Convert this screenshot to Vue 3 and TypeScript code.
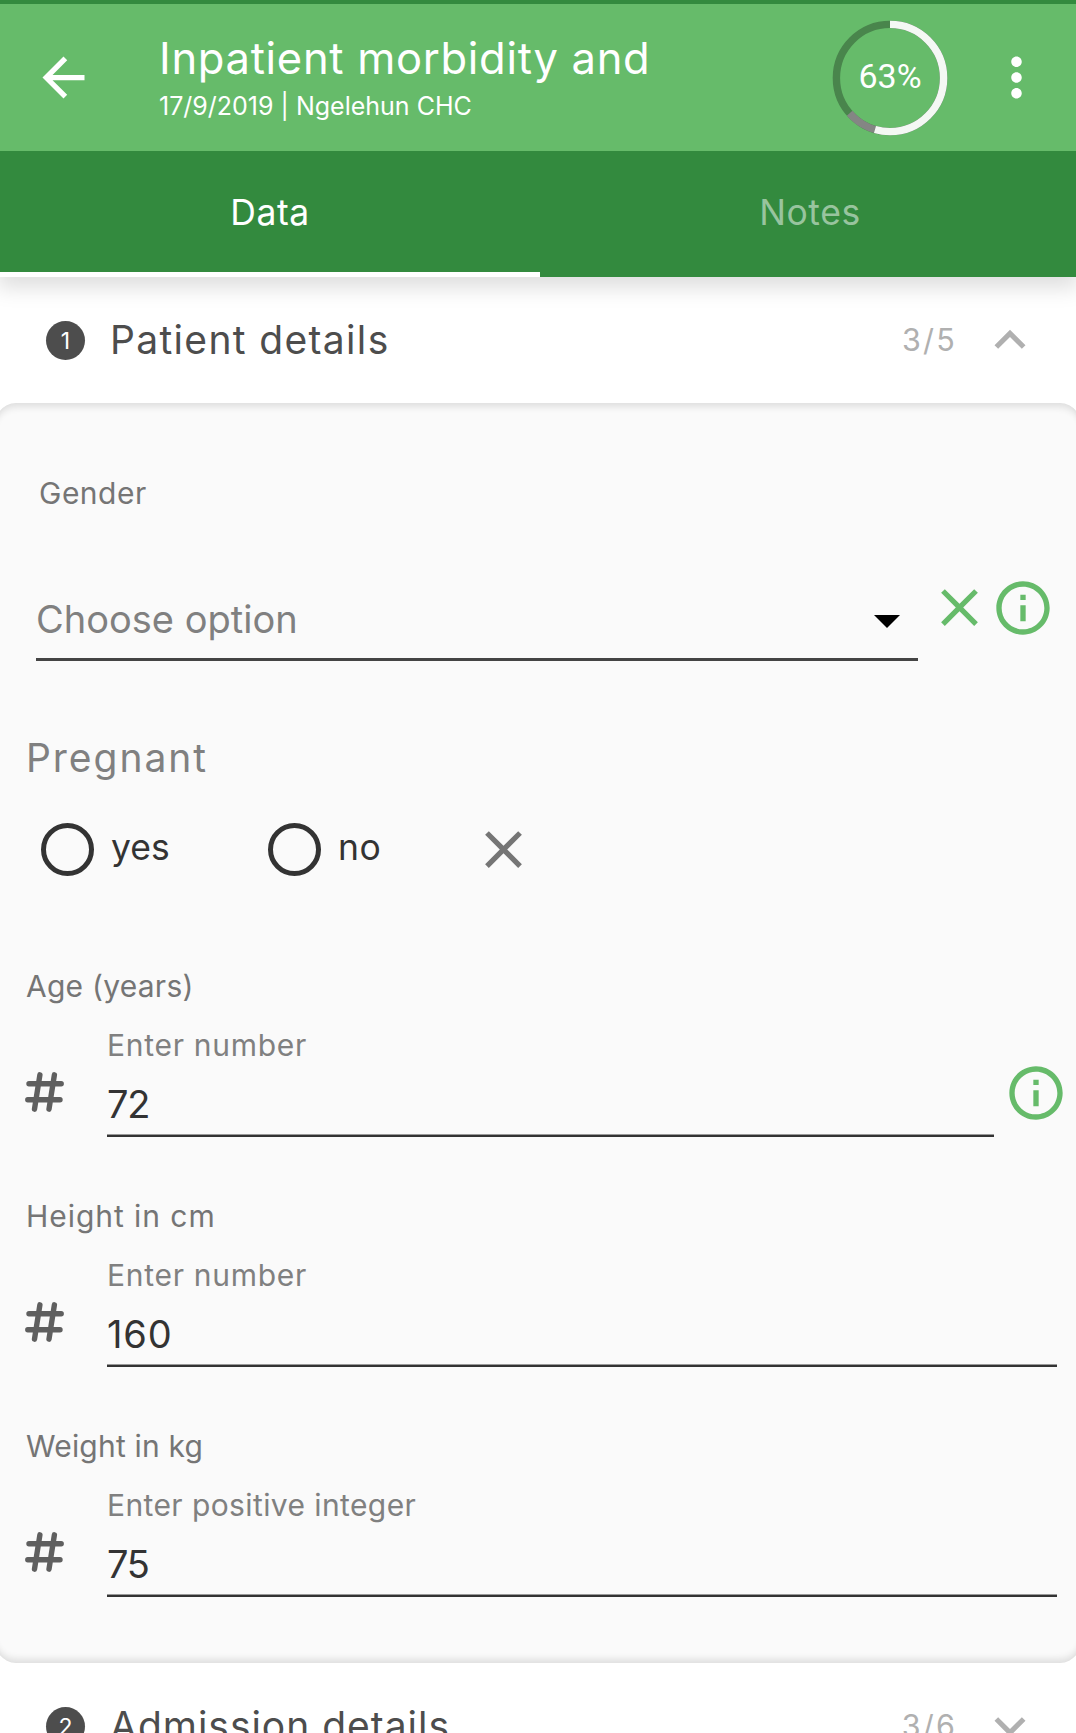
<script setup lang="ts">
interface NumberField {
  label: string
  hint: string
  value: string
  info: boolean
  spacing: string
  hintSpacing: string
  valueSpacing: string
}

const fields: NumberField[] = [
  { label: 'Age (years)', hint: 'Enter number', value: '72', info: true, spacing: '0.25px', hintSpacing: '0.72px', valueSpacing: '-1.3px' },
  { label: 'Height in cm', hint: 'Enter number', value: '160', info: false, spacing: '0.95px', hintSpacing: '0.72px', valueSpacing: '0.9px' },
  { label: 'Weight in kg', hint: 'Enter positive integer', value: '75', info: false, spacing: '0.19px', hintSpacing: '0.4px', valueSpacing: '-1.3px' },
]

const icons = {
  back: 'M20 11H7.83l5.59-5.59L12 4l-8 8 8 8 1.41-1.41L7.83 13H20v-2z',
  more: 'M12 8c1.1 0 2-.9 2-2s-.9-2-2-2-2 .9-2 2 .9 2 2 2zm0 2c-1.1 0-2 .9-2 2s.9 2 2 2 2-.9 2-2-.9-2-2-2zm0 6c-1.1 0-2 .9-2 2s.9 2 2 2 2-.9 2-2-.9-2-2-2z',
  close: 'M19 6.41L17.59 5 12 10.59 6.41 5 5 6.41 10.59 12 5 17.59 6.41 19 12 13.41 17.59 19 19 17.59 13.41 12z',
  info: 'M11 7h2v2h-2zm0 4h2v6h-2zm1-9C6.48 2 2 6.48 2 12s4.48 10 10 10 10-4.48 10-10S17.52 2 12 2zm0 18c-4.41 0-8-3.59-8-8s3.59-8 8-8 8 3.59 8 8-3.59 8-8 8z',
  less: 'M12 8l-6 6 1.41 1.41L12 10.83l4.59 4.58L18 14z',
  expand: 'M16.59 8.59L12 13.17 7.41 8.59 6 10l6 6 6-6z',
}

const radius = 53.6
const circumference = 2 * Math.PI * radius
const arc = (degrees: number) => `${(circumference * degrees) / 360} ${circumference}`
</script>

<template>
  <div class="screen">
    <header class="top">
      <div class="bar">
        <svg class="i63" viewBox="0 0 24 24"><path :d="icons.back" /></svg>
        <div class="heading">
          <h1>Inpatient morbidity and</h1>
          <p>17/9/2019 | Ngelehun CHC</p>
        </div>
        <svg class="ring" viewBox="0 0 116 116">
          <g fill="none" stroke-width="7.4" transform="rotate(-90 58 58)">
            <circle cx="58" cy="58" :r="radius" stroke="#49854c" />
            <circle cx="58" cy="58" :r="radius" stroke="#848684" :stroke-dasharray="arc(228.5)" />
            <circle cx="58" cy="58" :r="radius" stroke="#f4f8f4" :stroke-dasharray="arc(196)" />
          </g>
          <text x="58" y="68" text-anchor="middle">63%</text>
        </svg>
        <svg class="i63" viewBox="0 0 24 24"><path :d="icons.more" /></svg>
      </div>
      <nav class="tabs">
        <div class="tab active">Data</div>
        <div class="tab notes">Notes</div>
      </nav>
    </header>

    <section class="section">
      <span class="num">1</span>
      <h2 class="patient">Patient details</h2>
      <span class="count">3/5</span>
      <svg class="chev" viewBox="0 0 24 24"><path :d="icons.less" /></svg>
    </section>

    <div class="card">
      <div class="gender">Gender</div>
      <div class="choose-row">
        <div class="choose">
          <span>Choose option</span>
          <svg class="caret" viewBox="0 0 26 13"><path d="M0 0h26L13 13z" /></svg>
        </div>
        <svg class="i63 green" viewBox="0 0 24 24"><path :d="icons.close" /></svg>
        <svg class="i64 green" viewBox="0 0 24 24"><path :d="icons.info" /></svg>
      </div>

      <div class="pregnant">Pregnant</div>
      <div class="radios">
        <label class="yes"><i class="radio"></i><span>yes</span></label>
        <label class="no"><i class="radio"></i><span>no</span></label>
        <svg class="i63 gray" viewBox="0 0 24 24"><path :d="icons.close" /></svg>
      </div>

      <div v-for="f in fields" :key="f.label" class="block">
        <div class="label" :style="{ letterSpacing: f.spacing }">{{ f.label }}</div>
        <div class="entry">
          <svg class="hash" viewBox="0 0 39 40">
            <path d="M14.9 2.8 9.5 37.2M29.4 2.8 24 37.2M4 11.7h32.2M2.8 27.7H35" />
          </svg>
          <div class="field">
            <div class="hint" :style="{ letterSpacing: f.hintSpacing }">{{ f.hint }}</div>
            <div class="value" :style="{ letterSpacing: f.valueSpacing }">{{ f.value }}</div>
          </div>
          <svg v-if="f.info" class="i64 green info" viewBox="0 0 24 24"><path :d="icons.info" /></svg>
        </div>
      </div>
    </div>

    <section class="section">
      <span class="num">2</span>
      <h2 class="admission">Admission details</h2>
      <span class="count">3/6</span>
      <svg class="chev" viewBox="0 0 24 24"><path :d="icons.expand" /></svg>
    </section>
  </div>
</template>

<style>
html,
body {
  margin: 0;
  overflow: hidden;
  background: #fff;
}
</style>

<style scoped>
.screen {
  width: 1076px;
  height: 1733px;
  overflow: hidden;
  background: #fff;
  font-family: Inter, Roboto, sans-serif;
}
h1,
h2,
p {
  margin: 0;
  font-weight: 400;
}
svg {
  display: block;
  flex: none;
}
.top {
  position: relative;
  z-index: 1;
  border-top: 4px solid #338a3e;
  box-shadow: 0 8px 20px 3px rgba(0, 0, 0, 0.13);
}
.bar {
  display: flex;
  align-items: center;
  box-sizing: border-box;
  height: 147px;
  padding: 0 28px 0 32px;
  background: #66bb6a;
  color: #fff;
  fill: #fff;
}
.i63 {
  width: 63px;
  height: 63px;
}
.i64 {
  width: 64px;
  height: 64px;
}
.heading {
  align-self: flex-start;
  margin: 28px auto 0 64px;
  white-space: nowrap;
}
h1 {
  font-size: 43.5px;
  line-height: 52px;
  letter-spacing: 0.7px;
}
.heading p {
  margin-top: 7px;
  font-size: 25px;
  line-height: 30px;
}
.ring {
  width: 116px;
  height: 116px;
  margin-right: 37px;
}
.ring text {
  font: 34px Roboto, sans-serif;
}
.tabs {
  display: flex;
  height: 126px;
  background: #338a3e;
}
.tab {
  flex: none;
  box-sizing: border-box;
  width: 540px;
  height: 126px;
  text-align: center;
  font-size: 35.5px;
  line-height: 124px;
  letter-spacing: 0.6px;
  color: #fff;
}
.active {
  border-bottom: 5px solid #fff;
}
.notes {
  color: #98c49e;
}
.section {
  display: flex;
  align-items: center;
  box-sizing: border-box;
  height: 126px;
  padding: 0 35px 0 46px;
  background: #fff;
}
.num {
  width: 39px;
  height: 39px;
  margin-top: 1px;
  border-radius: 50%;
  background: #4d4d4d;
  color: #fff;
  font-size: 23px;
  line-height: 41px;
  text-align: center;
}
h2 {
  margin-left: 25px;
  margin-right: auto;
  color: #4d4d4d;
  font-size: 39px;
  line-height: 126px;
}
.patient {
  letter-spacing: 1.34px;
}
.admission {
  letter-spacing: 0.98px;
}
.count {
  color: #b0b0b0;
  font-size: 30.5px;
  line-height: 126px;
  letter-spacing: 2.2px;
}
.chev {
  width: 62px;
  height: 62px;
  margin-left: 22px;
  fill: #b0b0b0;
}
.card {
  box-sizing: border-box;
  height: 1260px;
  margin: 0 -8px;
  padding: 72px 8px 0;
  border-radius: 24px / 30px;
  background: #fafafa;
  box-shadow:
    inset 0 5px 7px -1px rgba(0, 0, 0, 0.11),
    inset 0 -5px 7px -1px rgba(0, 0, 0, 0.11);
}
.gender {
  margin-left: 39px;
  color: #757575;
  font-size: 30px;
  line-height: 36px;
  letter-spacing: 0.5px;
}
.choose-row {
  display: flex;
  align-items: flex-start;
  height: 86px;
  margin-top: 64px;
  padding-left: 36px;
}
.choose-row .green {
  margin-top: 1px;
}
.choose {
  display: flex;
  justify-content: space-between;
  box-sizing: border-box;
  width: 882px;
  height: 65px;
  margin: 21px 10px 0 0;
  padding-right: 18px;
  border-bottom: 3px solid #444;
  color: #808080;
  font-size: 38px;
  line-height: 46px;
}
.choose .caret {
  width: 26px;
  height: 13px;
  margin-top: 19px;
}
.green {
  fill: #66bb6a;
}
.gray {
  fill: #757575;
}
.pregnant {
  margin: 73px 0 0 26px;
  color: #808080;
  font-size: 39px;
  line-height: 48px;
  letter-spacing: 1.95px;
}
.radios {
  display: flex;
  align-items: center;
  height: 64px;
  margin-top: 35px;
  padding-left: 41px;
  color: #333;
  font-size: 35.5px;
  line-height: 44px;
}
.radios label {
  display: flex;
  align-items: center;
}
.radios span {
  padding-bottom: 2px;
}
.radio {
  box-sizing: border-box;
  width: 53px;
  height: 53px;
  margin-right: 17px;
  border: 5.4px solid #333;
  border-radius: 50%;
}
.yes {
  width: 227px;
}
.no {
  width: 204px;
  letter-spacing: 0.5px;
}
.block {
  height: 230px;
}
.radios + .block {
  margin-top: 87px;
}
.label {
  margin-left: 26px;
  color: #757575;
  font-size: 30px;
  line-height: 36px;
}
.entry {
  display: flex;
  height: 110px;
  margin-top: 23px;
  padding-right: 19px;
}
.hash {
  width: 39px;
  height: 40px;
  margin: 45px 43px 0 25px;
  fill: none;
  stroke: #5f5f5f;
  stroke-width: 5.4;
  stroke-linecap: round;
}
.field {
  flex: 1;
  box-sizing: border-box;
  border-bottom: 2px solid #333;
  box-shadow: inset 0 -1px #999;
}
.hint {
  color: #808080;
  font-size: 30px;
  line-height: 36px;
}
.value {
  margin-top: 18px;
  color: #333;
  font-size: 38px;
  line-height: 46px;
}
.info {
  margin: 34px -11px 0 10px;
}
</style>
